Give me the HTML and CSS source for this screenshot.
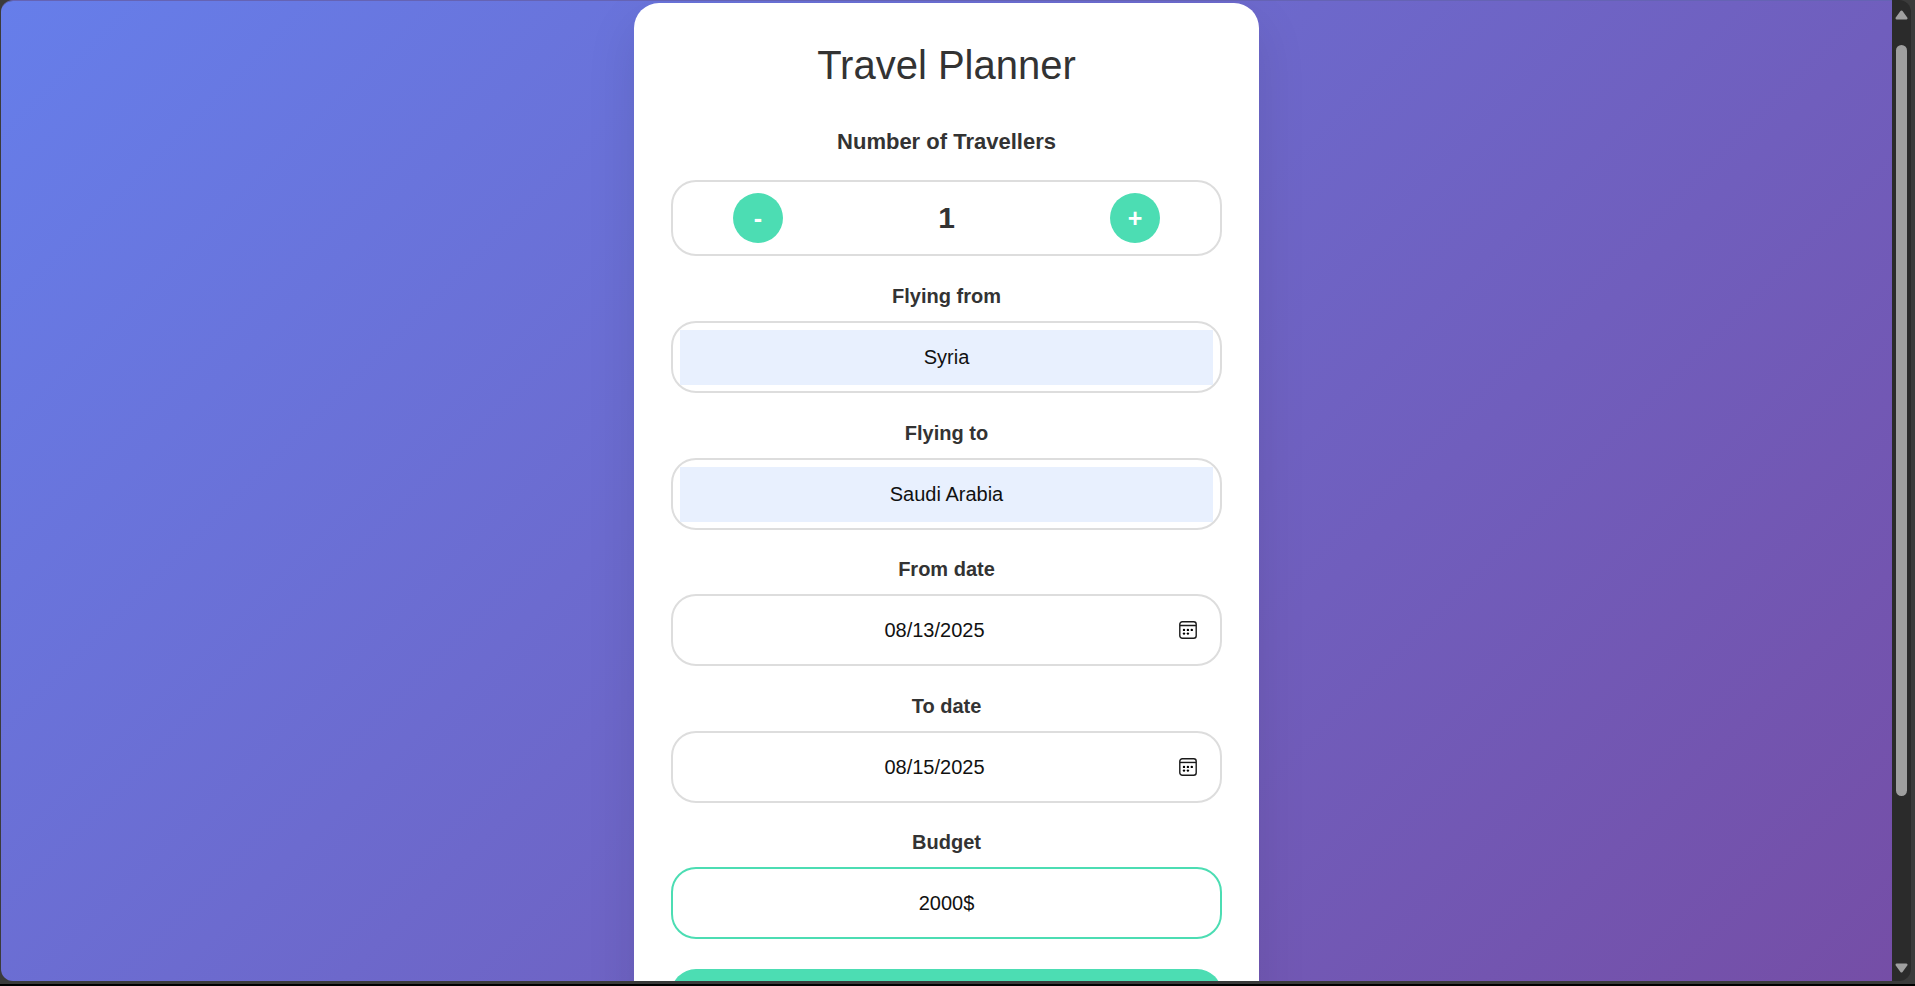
FILE: index.html
```html
<!DOCTYPE html>
<html lang="en">
<head>
<meta charset="utf-8">
<title>Travel Planner</title>
<link rel="stylesheet" href="styles.css">
</head>
<body>
<svg class="symbols" aria-hidden="true">
  <symbol id="calendar" viewBox="0 0 18 18">
    <rect x=".8" y=".8" width="16.4" height="16.4" rx="2.5" fill="none" stroke="#1a1a1a" stroke-width="1.4"/>
    <path d="M1 4.5h16" stroke="#1a1a1a" stroke-width="1.3"/>
    <g fill="#000">
      <circle cx="5" cy="8.9" r="1.2"/><circle cx="8.9" cy="8.9" r="1.2"/><circle cx="12.8" cy="8.9" r="1.2"/>
      <circle cx="5" cy="12.6" r="1.2"/><circle cx="8.9" cy="12.6" r="1.2"/>
    </g>
  </symbol>
</svg>
<div class="window">
  <main class="viewport">
    <div class="page">
      <form class="card">
        <h1 class="title">Travel Planner</h1>
        <h2 class="heading">Number of Travellers</h2>
        <div class="counter">
          <button class="round" type="button">-</button>
          <output class="count">1</output>
          <button class="round" type="button">+</button>
        </div>
        <div class="group">
          <div class="field">
            <label class="label" for="from">Flying from</label>
            <div class="box"><input class="input filled" id="from" type="text" value="Syria"></div>
          </div>
          <div class="field">
            <label class="label" for="to">Flying to</label>
            <div class="box"><input class="input filled" id="to" type="text" value="Saudi Arabia"></div>
          </div>
        </div>
        <div class="group">
          <div class="field">
            <label class="label" for="start">From date</label>
            <div class="box"><input class="input date" id="start" type="date" value="2025-08-13"><svg class="icon" aria-hidden="true"><use href="#calendar"/></svg></div>
          </div>
          <div class="field">
            <label class="label" for="end">To date</label>
            <div class="box"><input class="input date" id="end" type="date" value="2025-08-15"><svg class="icon" aria-hidden="true"><use href="#calendar"/></svg></div>
          </div>
        </div>
        <div class="group">
          <div class="field">
            <label class="label" for="budget">Budget</label>
            <div class="box active"><input class="input" id="budget" type="text" value="2000$"></div>
          </div>
        </div>
        <button class="submit" type="submit"></button>
      </form>
    </div>
  </main>
  <div class="scrollbar" aria-hidden="true">
    <svg class="arrow" viewBox="0 0 13 10"><path d="M6.5 1.8 11.2 8.2H1.8Z" fill="#9f9f9f" stroke="#9f9f9f" stroke-width="2.6" stroke-linejoin="round"/></svg>
    <div class="track"><div class="thumb"></div></div>
    <svg class="arrow" viewBox="0 0 13 10"><path d="M6.5 8.2 11.2 1.8H1.8Z" fill="#9f9f9f" stroke="#9f9f9f" stroke-width="2.6" stroke-linejoin="round"/></svg>
  </div>
</div>
</body>
</html>
```
FILE: styles.css
```css
* { box-sizing: border-box; }

body {
  margin: 0;
  height: 100vh;
  overflow: hidden;
  background: #3b3b3b;
  border-bottom: 2px solid #000;
  font-family: "Liberation Sans", Arial, sans-serif;
  color: #333;
}

.symbols { display: none; }

.window {
  display: flex;
  height: 100%;
  padding: 0 4px 3px 1px;
}

.viewport {
  flex: 1;
  min-width: 0;
  overflow: hidden;
  border-radius: 12px 0 0 12px;
  border-top: 1px solid #6563b4;
}

.page {
  padding: 2px 20px 88px;
  background: linear-gradient(135deg, #667eea 0%, #764ba2 100%);
}

.card {
  display: flex;
  flex-direction: column;
  max-width: 625px;
  margin: 0 auto;
  padding: 38px 37px;
  border-radius: 25px;
  background: #fff;
  box-shadow: 0 20px 50px rgba(0, 0, 0, 0.1);
  text-align: center;
}

.title {
  margin: 0 0 38px;
  font-size: 40px;
  font-weight: 400;
  line-height: 48px;
}

.heading {
  margin: 0 0 23px;
  font-size: 22px;
  line-height: 30px;
}

.counter {
  display: flex;
  align-items: center;
  justify-content: space-between;
  height: 76px;
  margin-bottom: 25px;
  padding: 0 60px;
  border: 2px solid #ddd;
  border-radius: 25px;
}

.round {
  width: 50px;
  height: 50px;
  padding: 0;
  border: 0;
  border-radius: 50%;
  background: #4cddb3;
  color: #fff;
  font: bold 25px "Liberation Sans", Arial, sans-serif;
}

.count {
  font-size: 30px;
  font-weight: 700;
}

.group {
  display: flex;
  flex-direction: column;
  gap: 25px;
  margin-bottom: 24px;
}

.label {
  display: block;
  margin-bottom: 10px;
  font-size: 20px;
  font-weight: 700;
  line-height: 30px;
}

.box {
  position: relative;
  padding: 7px 7px 6px;
  border: 2px solid #ddd;
  border-radius: 25px;
  overflow: hidden;
}

.active { border-color: #4cddb3; }

.input {
  display: block;
  width: 100%;
  height: 55px;
  padding: 0 12px;
  border: 0;
  outline: 0;
  background: transparent;
  color: #111;
  font: 20px "Liberation Sans", Arial, sans-serif;
  text-align: center;
}

.filled { background: #e8f0fe; }

.date::-webkit-calendar-picker-indicator { opacity: 0; }

.date::-webkit-datetime-edit-month-field,
.date::-webkit-datetime-edit-day-field,
.date::-webkit-datetime-edit-year-field { padding: 0; }

.icon {
  position: absolute;
  top: 25px;
  right: 23px;
  width: 18px;
  height: 18px;
  pointer-events: none;
}

.submit {
  height: 70px;
  margin-top: 6px;
  border: 0;
  border-radius: 25px;
  background: #4cddb3;
}

.scrollbar {
  display: flex;
  flex-direction: column;
  align-items: center;
  gap: 8px;
  width: 19px;
  padding: 10px 3px 8px;
  border-radius: 0 12px 12px 0;
  background: #2b2b2b;
}

.arrow {
  width: 13px;
  height: 10px;
}

.track {
  flex: 1;
  width: 11px;
  padding-top: 17px;
}

.thumb {
  height: 82.5%;
  border-radius: 6px;
  background: #9f9f9f;
}
```
